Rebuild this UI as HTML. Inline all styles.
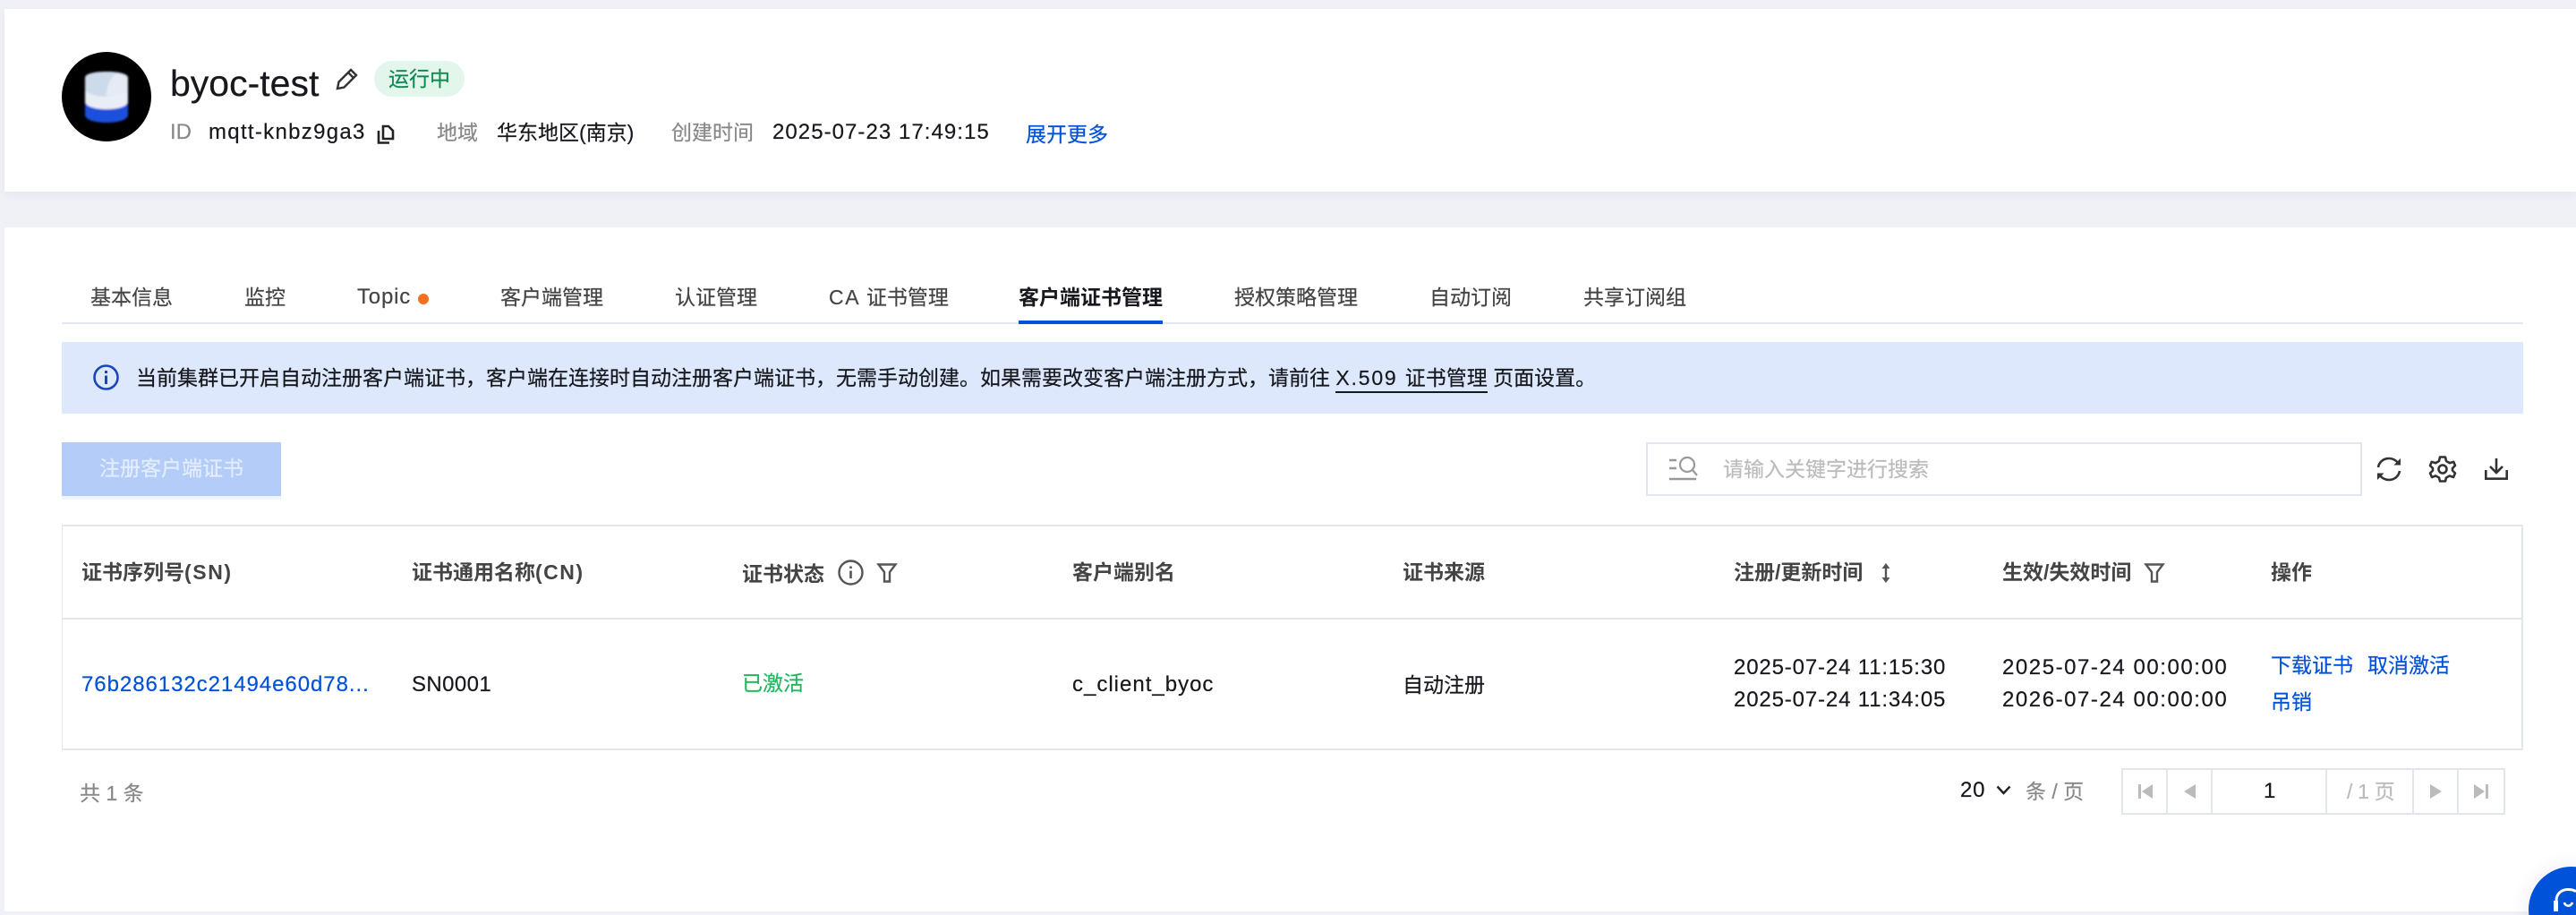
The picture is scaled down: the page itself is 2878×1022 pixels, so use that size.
<!DOCTYPE html>
<html lang="zh-CN"><head><meta charset="utf-8"><title>byoc-test</title>
<style>
*{box-sizing:border-box}
html,body{margin:0;padding:0;width:2878px;height:1022px;overflow:hidden;background:#f0f1f7}
body{position:relative;font-family:"Liberation Sans","Noto Sans CJK SC",sans-serif;color:#16181d}
.a{position:absolute}
.t{position:absolute;white-space:nowrap;line-height:40px;height:40px;font-size:23px;-webkit-text-stroke:.2px currentColor}
.l{font-size:24px}
.g{color:#888}
.b{color:#0052d9}
.h{font-weight:700;color:#444;-webkit-text-stroke:0}
svg{position:absolute;overflow:visible}
</style></head><body>
<div class="a" style="left:5px;top:10px;width:2873px;height:204px;background:#fff;box-shadow:0 4px 8px rgba(40,60,110,.05)"></div>
<div class="a" style="left:5px;top:254px;width:2873px;height:764px;background:#fff"></div>

<svg style="left:69px;top:58px" width="100" height="100" viewBox="0 0 100 100">
<defs><filter id="bl"><feGaussianBlur stdDeviation="1"/></filter></defs>
<circle cx="50" cy="50" r="50" fill="#000"/>
<g filter="url(#bl)">
<path d="M26 54V70C26 76 37 79 50 79S74 76 74 70V54Z" fill="#1c4fdc"/>
<path d="M26 29C26 24 37 22 50 22S74 24 74 29V55C74 61 62 64 50 64S26 61 26 55Z" fill="#cddaea"/>
<path d="M26 43C34 52 64 52 74 43V55C74 61 62 64 50 64S26 61 26 55Z" fill="#e9eef6"/>
<path d="M50 49C50 37 54 28 62 24L74 28V43C66 49 58 50 50 49Z" fill="#e4ebf5"/>
</g></svg>

<div class="t" style="left:190px;top:69px;font-size:41px;line-height:48px;height:48px">byoc-test</div>
<svg style="left:375px;top:75px" width="26" height="26" viewBox="0 0 26 26" fill="none" stroke="#333" stroke-width="2.4"><path d="M2 24L3.5 16.5 17 3 23 9 9.5 22.5Z"/><path d="M14 6L20 12"/></svg>
<div class="a" style="left:418px;top:68px;width:101px;height:40px;border-radius:20px;background:#e3f6ec"></div>
<div class="t" style="left:434px;top:68px;color:#0f8a4f">运行中</div>

<div class="t l g" style="left:190px;top:128px">ID</div>
<div class="t l" style="left:233px;top:128px;letter-spacing:1.3px">mqtt-knbz9ga3</div>
<svg style="left:421px;top:139px" width="20" height="22" viewBox="0 0 20 22" fill="none" stroke="#222" stroke-width="2.6"><path d="M7 2H13L18 7V16H7Z"/><path d="M2 7V20.5H14"/></svg>
<div class="t g" style="left:488px;top:128px">地域</div>
<div class="t" style="left:555px;top:128px">华东地区(南京)</div>
<div class="t g" style="left:750px;top:128px">创建时间</div>
<div class="t l" style="left:863px;top:128px;letter-spacing:1.05px">2025-07-23 17:49:15</div>
<div class="t b" style="left:1146px;top:130px">展开更多</div>

<div class="t" style="left:101px;top:312px;color:#444">基本信息</div>
<div class="t" style="left:273px;top:312px;color:#444">监控</div>
<div class="t l" style="left:399px;top:312px;color:#444;letter-spacing:.8px">Topic</div>
<div class="a" style="left:467px;top:328px;width:12px;height:12px;border-radius:50%;background:#f5701f"></div>
<div class="t" style="left:559px;top:312px;color:#444">客户端管理</div>
<div class="t" style="left:754px;top:312px;color:#444">认证管理</div>
<div class="t" style="left:926px;top:312px;color:#444"><span style="letter-spacing:1.6px">CA </span>证书管理</div>
<div class="t" style="left:1138px;top:312px;font-weight:700;-webkit-text-stroke:0">客户端证书管理</div>
<div class="t" style="left:1379px;top:312px;color:#444">授权策略管理</div>
<div class="t" style="left:1597px;top:312px;color:#444">自动订阅</div>
<div class="t" style="left:1769px;top:312px;color:#444">共享订阅组</div>
<div class="a" style="left:69px;top:360px;width:2750px;height:2px;background:#e3e6ef"></div>
<div class="a" style="left:1138px;top:358px;width:161px;height:4px;background:#0052d9"></div>

<div class="a" style="left:69px;top:382px;width:2750px;height:80px;background:#dde8fd"></div>
<svg style="left:104px;top:407px" width="29" height="29" viewBox="0 0 29 29" fill="none" stroke="#1b47b5" stroke-width="2.6"><circle cx="14.5" cy="14.5" r="13"/><path d="M14.5 12.5V22M14.5 7V10" stroke-width="3"/></svg>
<div class="t" style="left:152px;top:402px">当前集群已开启自动注册客户端证书，客户端在连接时自动注册客户端证书，无需手动创建。如果需要改变客户端注册方式，请前往 <span style="border-bottom:2px solid #16181d;padding-bottom:2px"><span style="letter-spacing:1.8px">X.509 </span>证书管理</span> 页面设置。</div>

<div class="a" style="left:69px;top:554px;width:245px;height:4px;background:#f1f6fe"></div>
<div class="a" style="left:69px;top:494px;width:245px;height:60px;background:#b3cdf8"></div>
<div class="t" style="left:111px;top:503px;color:#e4edfd">注册客户端证书</div>

<div class="a" style="left:1839px;top:494px;width:800px;height:60px;background:#fff;border:2px solid #e3e6ef"></div>
<svg style="left:1865px;top:510px" width="32" height="27" viewBox="0 0 32 27" fill="none" stroke="#999" stroke-width="2.2"><path d="M0 4H8M0 13H8M0 25H30" stroke-width="2.6"/><circle cx="20" cy="9" r="8"/><path d="M26 15L31 21"/></svg>
<div class="t" style="left:1925px;top:504px;color:#bbb">请输入关键字进行搜索</div>
<svg style="left:2655px;top:510px" width="28" height="28" viewBox="0 0 28 28" fill="none" stroke="#333" stroke-width="2.6"><path d="M2 12C3 6 8 2 14 2c4 0 8 2 10 5"/><path d="M26 16c-1 6-6 10-12 10-4 0-8-2-10-5"/><path d="M27 2V9.500H19.500Z" fill="#333" stroke="none"/><path d="M1 26V18.500H8.500Z" fill="#333" stroke="none"/></svg>
<svg style="left:2714px;top:509px" width="30" height="30" viewBox="0 0 30 30" fill="none" stroke="#333" stroke-width="2.6" stroke-linejoin="round"><path d="M12 1.500H18L19 6 23 8.200 27.200 6.800 29 11 26 14V16.500L29 19.500 27 24 22.800 22.500 19 24.500 18 28.500H12L11 24.500 7.200 22.500 3 24 1 19.500 4 16.500V14L1 11 2.800 6.800 7 8.200 11 6Z"/><circle cx="15" cy="15" r="4.500"/></svg>
<svg style="left:2776px;top:512px" width="26" height="24" viewBox="0 0 26 24" fill="none" stroke="#333" stroke-width="2.6"><path d="M13 0V15M6 9L13 16 20 9"/><path d="M1.300 13V22.700H24.700V13"/></svg>

<div class="a" style="left:69px;top:586px;width:2750px;height:252px;border:2px solid #e3e6eb;border-left-width:1.5px"></div>
<div class="a" style="left:69px;top:690px;width:2750px;height:2px;background:#e3e6eb"></div>

<div class="t h" style="left:91px;top:619px">证书序列号<span style="letter-spacing:1.6px">(SN)</span></div>
<div class="t h" style="left:460px;top:619px">证书通用名称<span style="letter-spacing:1.5px">(CN)</span></div>
<div class="t h" style="left:829px;top:621px">证书状态</div>
<svg style="left:936px;top:625px" width="29" height="29" viewBox="0 0 29 29" fill="none" stroke="#555" stroke-width="2.4"><circle cx="14.500" cy="14.500" r="13"/><path d="M14.500 12.500V21M14.500 7.500V10" stroke-width="2.600"/></svg>
<svg style="left:980px;top:629px" width="22" height="22" viewBox="0 0 22 22" fill="none" stroke="#555" stroke-width="2.4"><path d="M1.500 1.500H20.500L14 10V20.500H8V10Z"/></svg>
<div class="t h" style="left:1198px;top:619px">客户端别名</div>
<div class="t h" style="left:1567px;top:619px">证书来源</div>
<div class="t h" style="left:1937px;top:619px">注册/更新时间</div>
<svg style="left:2102px;top:629px" width="10" height="22" viewBox="0 0 10 22" fill="#555"><path d="M5 0L9.500 6H6.200V16H9.500L5 22 .5 16H3.800V6H.5Z"/></svg>
<div class="t h" style="left:2237px;top:619px">生效/失效时间</div>
<svg style="left:2396px;top:629px" width="22" height="22" viewBox="0 0 22 22" fill="none" stroke="#555" stroke-width="2.4"><path d="M1.500 1.500H20.500L14 10V20.500H8V10Z"/></svg>
<div class="t h" style="left:2537px;top:619px">操作</div>

<div class="t l b" style="left:91px;top:745px;letter-spacing:.95px">76b286132c21494e60d78...</div>
<div class="t l" style="left:460px;top:745px;letter-spacing:.4px">SN0001</div>
<div class="t" style="left:829px;top:743px;color:#1fb85f">已激活</div>
<div class="t l" style="left:1198px;top:745px;letter-spacing:1px">c_client_byoc</div>
<div class="t" style="left:1567px;top:745px">自动注册</div>
<div class="t l" style="left:1937px;top:726px;letter-spacing:.85px">2025-07-24 11:15:30</div>
<div class="t l" style="left:1937px;top:762px;letter-spacing:.85px">2025-07-24 11:34:05</div>
<div class="t l" style="left:2237px;top:726px;letter-spacing:1.55px">2025-07-24 00:00:00</div>
<div class="t l" style="left:2237px;top:762px;letter-spacing:1.55px">2026-07-24 00:00:00</div>
<div class="t b" style="left:2537px;top:723px">下载证书</div>
<div class="t b" style="left:2645px;top:723px">取消激活</div>
<div class="t b" style="left:2537px;top:764px">吊销</div>

<div class="t g" style="left:89px;top:866px">共 1 条</div>
<div class="t l" style="left:2190px;top:863px;letter-spacing:.8px">20</div>
<svg style="left:2230px;top:877px" width="17" height="11" viewBox="0 0 17 11" fill="none" stroke="#222" stroke-width="2.4"><path d="M1.500 1.500L8.500 9 15.500 1.500"/></svg>
<div class="t g" style="left:2263px;top:864px">条 / 页</div>

<div class="a" style="left:2370px;top:858px;width:429px;height:52px;border:2px solid #e3e6ef"></div>
<div class="a" style="left:2420px;top:858px;width:2px;height:52px;background:#e3e6ef"></div>
<div class="a" style="left:2470px;top:858px;width:2px;height:52px;background:#e3e6ef"></div>
<div class="a" style="left:2598px;top:858px;width:2px;height:52px;background:#e3e6ef"></div>
<div class="a" style="left:2695px;top:858px;width:2px;height:52px;background:#e3e6ef"></div>
<div class="a" style="left:2745px;top:858px;width:2px;height:52px;background:#e3e6ef"></div>
<svg style="left:2389px;top:876px" width="16" height="16" viewBox="0 0 16 16" fill="#bbb"><path d="M0 0H3V16H0ZM16 0V16L4 8Z"/></svg>
<svg style="left:2440px;top:876px" width="13" height="16" viewBox="0 0 13 16" fill="#bbb"><path d="M13 0V16L0 8Z"/></svg>
<div class="t l" style="left:2529px;top:864px">1</div>
<div class="t" style="left:2622px;top:864px;color:#bbb;letter-spacing:-.3px">/ 1 页</div>
<svg style="left:2715px;top:876px" width="13" height="16" viewBox="0 0 13 16" fill="#bbb"><path d="M0 0V16L13 8Z"/></svg>
<svg style="left:2764px;top:876px" width="16" height="16" viewBox="0 0 16 16" fill="#bbb"><path d="M13 0H16V16H13ZM0 0V16L12 8Z"/></svg>

<div class="a" style="left:2825px;top:968px;width:96px;height:96px;border-radius:50%;background:#0052d9;box-shadow:0 0 24px rgba(0,30,90,.08)"></div>
<svg style="left:2853px;top:992px" width="25" height="30" viewBox="0 0 25 30" fill="none" stroke="#fff" stroke-width="3"><path d="M3 14C3 6 9 1.500 16 1.500S25 4 25 4"/><path d="M0 14H5V26H0Z" fill="#fff" stroke="none"/><path d="M12 16C13 21 19 21 21 16" stroke-width="2.600"/></svg>
</body></html>
